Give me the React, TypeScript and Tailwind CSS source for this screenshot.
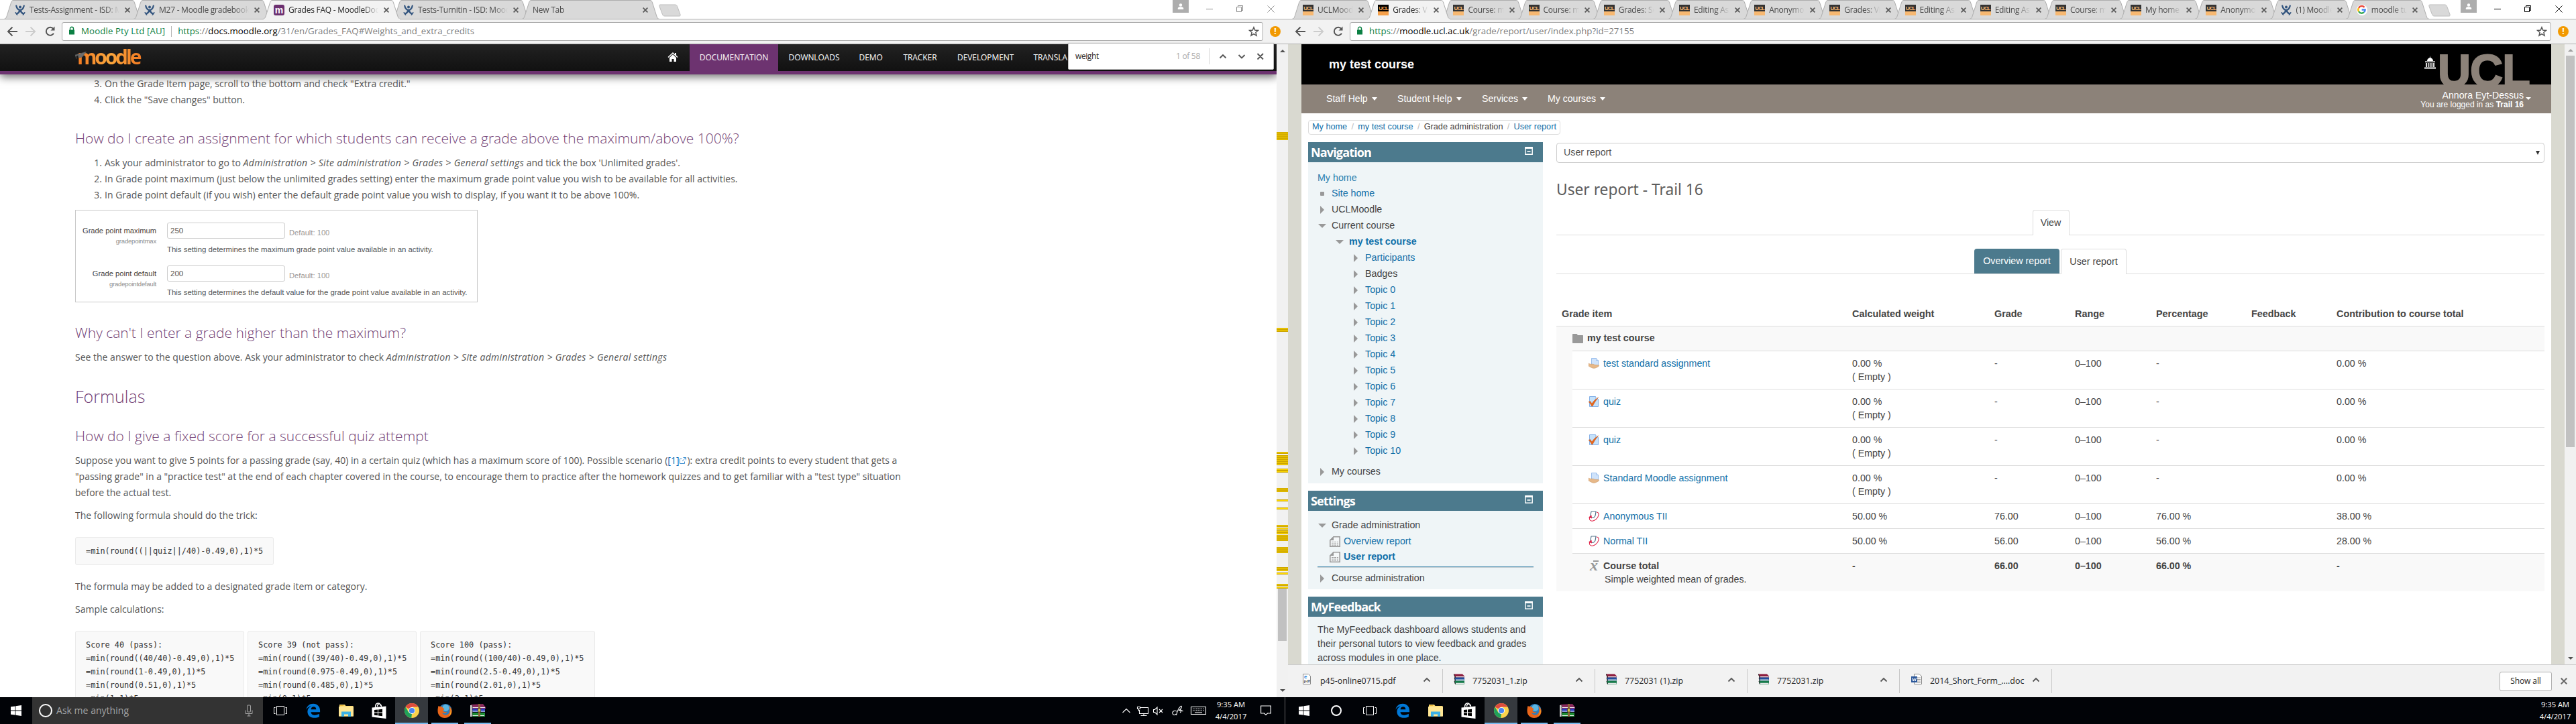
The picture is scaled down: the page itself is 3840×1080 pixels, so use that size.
import type { ReactNode } from "react";

/* ---------- small icons ---------- */
const Figure = () => (
  <svg width="16" height="16" viewBox="0 0 16 16" fill="none" stroke="#33557f" strokeLinecap="round">
    <circle cx="8" cy="3.6" r="2" fill="#33557f" stroke="none" />
    <path d="M2.2 1.5C3 5.5 5 7.5 8 8.3 11 7.500 13 5.500 13.800 1.500" strokeWidth="2.2" />
    <path d="M3 13.500C5.500 12.500 7 10.500 8 8M13 13.500C10.500 12.500 9 10.500 8 8" strokeWidth="2.400" />
    <path d="M1.200 11.800L3.600 15M14.800 11.800L12.400 15" strokeWidth="1.600" />
  </svg>
);
const MoodleFav = () => (
  <div className="flex h-4 w-4 items-center justify-center rounded-[3px] bg-[#6c3070] font-['Liberation_Sans'] text-[14px] leading-none font-bold text-white">m</div>
);
const UclFav = ({ dim }: { dim: boolean }) => (
  <div className={"flex h-4 w-4 flex-col " + (dim ? "bg-[#f7b871]" : "bg-[#f5a04a]")}>
    <div className={"flex h-[10px] items-end justify-center font-['Liberation_Sans'] text-[8px] leading-[8px] font-bold tracking-[-0.9px] " + (dim ? "bg-[#333] text-[#f7b871]" : "bg-black text-[#f5a04a]")}>UCL</div>
  </div>
);
const GoogleFav = () => (
  <div className="flex h-4 w-4 items-center justify-center rounded-full bg-white">
    <svg width="13" height="13" viewBox="0 0 16 16" fill="none" strokeWidth="3">
      <path d="M13 3.600A6.300 6.300 0 0 0 2.600 4.700" stroke="#ea4335" />
      <path d="M2.600 4.700A6.300 6.300 0 0 0 2.600 11.300" stroke="#fbbc05" />
      <path d="M2.600 11.300A6.300 6.300 0 0 0 12.400 12.600" stroke="#34a853" />
      <path d="M12.400 12.600A6.300 6.300 0 0 0 14.300 8H8.200" stroke="#4285f4" />
    </svg>
  </div>
);
const Cross = ({ s = 8, c = "#5a5a5a", w = 1.8 }: { s?: number; c?: string; w?: number }) => (
  <svg width={s} height={s} viewBox="0 0 8 8" className="shrink-0"><path d="M.6.6L7.400 7.400M7.400.6L.6 7.400" stroke={c} strokeWidth={(w * 8) / s} /></svg>
);
const Caret = () => <i className="ml-[6px] border-x-4 border-t-[5px] border-x-transparent border-t-white" />;

/* ---------- browser frame ---------- */
type TabT = { t: string; icon?: ReactNode; active?: boolean };

function Tab({ tab, w }: { tab: TabT; w: number }) {
  return (
    <div className={"relative mr-[-12px] flex h-[29px] shrink-0 items-center pl-4 " + (tab.active ? "z-10" : "")} style={{ width: w }}>
      <svg className="absolute inset-0" width={w} height="29" viewBox={`0 0 ${w} 29`}>
        <path d={`M0 28.500C3 28 3.500 26 4.500 23L10.500 4C11.500 1.500 12 .500 14 .500H${w - 14}C${w - 12} .500 ${w - 11.500} 1.500 ${w - 10.500} 4L${w - 4.500} 23C${w - 3.500} 26 ${w - 3} 28 ${w} 28.500`} fill={tab.active ? "#f2f2f2" : "#d9d9d9"} stroke="#adadad" />
        {tab.active ? <path d={`M1 28.500H${w - 1}`} stroke="#f2f2f2" strokeWidth="1.500" /> : <path d={`M0 28.500H${w}`} stroke="#adadad" />}
      </svg>
      {tab.icon && <span className="relative mr-[6px] h-4 w-4 shrink-0">{tab.icon}</span>}
      <span className={"relative flex-1 overflow-hidden text-[12px] tracking-[-0.25px] whitespace-nowrap [mask-image:linear-gradient(90deg,#000_calc(100%-22px),transparent)] " + (tab.active ? "text-[#222]" : "text-[#484848]")}>{tab.t}</span>
      <span className="relative mr-[17px] ml-2 flex"><Cross s={8} /></span>
    </div>
  );
}

function Browser({ tabs, tabW, url, inactive }: { tabs: TabT[]; tabW: number; url: ReactNode; inactive: boolean }) {
  const wc = inactive ? "#8c8c8c" : "#000";
  return (
    <div className="h-[66px] w-[1920px] shrink-0 font-['Open_Sans',sans-serif]">
      <div className="flex h-[29px] bg-white bg-[linear-gradient(#adadad,#adadad)] bg-[length:100%_1px] bg-bottom bg-no-repeat pl-[6px]">
        {tabs.map((t, i) => <Tab key={i} tab={t} w={tabW} />)}
        <svg width="36" height="20" viewBox="0 0 36 20" className="mt-[6px] ml-[10px]">
          <path d="M3 1H25C27 1 28 2 28.600 3.500L33 15.500C33.500 17.500 33 18 31.500 18H10C8 18 7 17 6.500 15.500L2 3.500C1.500 2 2 1 3 1Z" fill="#d9d9d9" stroke="#bcbcbc" />
        </svg>
        <div className="mr-[16px] ml-auto flex h-[26px]">
          <div className="flex h-[19px] w-6 items-center justify-center bg-[#adadad]">
            <svg width="10" height="10" viewBox="0 0 10 10" fill="#fff"><circle cx="5" cy="2.500" r="2.200" /><path d="M.8 9V7.500C.8 5.500 3 5.200 5 5.200s4.200.3 4.200 2.300V9z" /></svg>
          </div>
          <svg width="132" height="26" viewBox="0 0 132 26" fill="none" stroke={wc} strokeWidth="1">
            <path d="M26 13.500H36M71.500 10.500H78.500V17.500H71.500ZM73.500 10.500V8.500H80.500V15.500H78.500M117.500 8.500L127.500 18.500M127.500 8.500L117.500 18.500" />
          </svg>
        </div>
      </div>
      <div className="flex h-[37px] items-center border-b border-[#b0b0b0] bg-[#f2f2f2] pl-[10px]">
        <svg width="76" height="18" viewBox="0 0 76 18" fill="none" strokeWidth="2">
          <path d="M16 9H2M8.500 2.500L2 9L8.500 15.500" stroke="#555" />
          <path d="M28 9H42M35.500 2.500L42 9L35.500 15.500" stroke="#ccc" />
          <path d="M69.500 5A6 6 0 1 0 70 11.800" stroke="#555" />
          <path d="M71.500 1.500V7.500H65.500Z" fill="#555" />
        </svg>
        <div className="ml-[6px] flex h-7 w-[1791px] items-center rounded-[3px] border border-[#a8a8a8] bg-white pl-[9px] text-[13.25px] whitespace-nowrap text-[#808080]">
          <svg width="10" height="14" viewBox="0 0 10 14" className="mt-[-2px] mr-[9px]"><path d="M2.500 6V3.800a2.500 2.500 0 0 1 5 0V6" fill="none" stroke="#0b8043" strokeWidth="1.400" /><rect x="1" y="5.500" width="8" height="7" rx=".6" fill="#0b8043" /></svg>
          {url}
          <svg width="16" height="16" viewBox="0 0 24 24" className="mr-[5px] ml-auto" fill="none" stroke="#555" strokeWidth="2.200"><path d="M12 2.500l2.700 6.600 7.100.5-5.400 4.600 1.700 7L12 17.400l-6.100 3.800 1.700-7-5.400-4.600 7.100-.5z" /></svg>
        </div>
        <div className="ml-[10px] flex h-4 w-4 items-center justify-center rounded-full bg-[#f29900] text-[12px] leading-none font-bold text-white">!</div>
      </div>
    </div>
  );
}

/* ---------- left page ---------- */
function Nav({ children, cls = "" }: { children: ReactNode; cls?: string }) {
  return <span className={"text-[12px] tracking-[-0.08px] whitespace-nowrap text-white " + cls}>{children}</span>;
}
const H = ({ children, cls }: { children: ReactNode; cls: string }) => (
  <h3 className={"flex h-8 items-center text-[21px] font-light whitespace-nowrap text-[#733f75] " + cls}>{children}</h3>
);
const P = ({ children, cls = "" }: { children: ReactNode; cls?: string }) => (
  <p className={"h-6 leading-6 whitespace-pre " + cls}>{children}</p>
);
const Path = () => <em className="tracking-[0.32px]">Administration &gt; Site administration &gt; Grades &gt; General settings</em>;
const Li = ({ n, children }: { n: number; children: ReactNode }) => (
  <div className="flex h-6 leading-6 whitespace-pre"><span className="w-[44px] pr-[4px] text-right">{n}.</span>{children}</div>
);
function Setting({ label, sub, val, desc }: { label: string; sub: string; val: string; desc: string }) {
  return (
    <div className="flex h-16">
      <div className="flex w-[120px] flex-col items-end text-[#444]">
        <span className="mt-[5px] h-[14px] text-[11.2px] leading-[14px]">{label}</span>
        <span className="mt-[3px] text-[9.500px] leading-[12px] tracking-[-0.2px] text-[#8c8c8c]">{sub}</span>
      </div>
      <div className="ml-4">
        <div className="flex">
          <div className="h-6 w-[176px] rounded-[3px] border border-[#ccc] pl-[4px] text-[11.500px] leading-[22px] text-[#555]">{val}</div>
          <span className="mt-[8px] ml-[6px] text-[11.200px] leading-[14px] text-[#999]">Default: 100</span>
        </div>
        <p className="mt-[8px] text-[11.420px] leading-[16px] whitespace-nowrap text-[#555]">{desc}</p>
      </div>
    </div>
  );
}
const Code = ({ lines, cls = "" }: { lines: string[]; cls?: string }) => (
  <div className={"rounded-[3px] border border-[#eaeaea] bg-[#f9f9f9] py-[10px] pl-[15px] font-['DejaVu_Sans_Mono',monospace] text-[11.860px] leading-5 whitespace-pre text-[#333] " + cls}>
    {lines.map((l, i) => <div key={i}>{l}</div>)}
  </div>
);

const MARKS = [[197, 12], [489, 6], [674, 3], [679, 15], [699, 6], [728, 6], [745, 3], [757, 3], [783, 3], [787, 3], [791, 6], [798, 9], [816, 9], [846, 6], [854, 3], [871, 3], [875, 3]];

function MoodleLogo() {
  return (
    <div className="relative h-[30px] w-[100px]">
      <span className="absolute top-[-1px] left-[3px] bg-gradient-to-r from-[#f27a22] via-[#fba63c] to-[#f27a22] bg-clip-text pr-[4px] font-['Open_Sans'] text-[30px] leading-[30px] font-bold tracking-[-3.2px] text-transparent">moodle</span>
      <svg className="absolute top-[6px] left-0" width="20" height="12" viewBox="0 0 20 12"><path d="M0 5L17 0 13 4.500C12 8 9 9 5 9L4.500 5.500 1.500 6.500V11" fill="#6d6d6d" stroke="#555" strokeWidth=".6" /></svg>
    </div>
  );
}

function LeftPage() {
  return (
    <div className="relative flex h-[974px] w-[1920px] bg-white">
      <div className="h-full w-[1903px] overflow-hidden font-['Open_Sans',sans-serif] text-[14px] text-[#555]">
        <header className="relative flex h-[45px] border-b-[5px] border-[#6d3370] bg-gradient-to-b from-[#222] to-[#111] shadow-[0_4px_12px_rgba(0,0,0,0.55)]">
          <div className="w-[995px] pt-[5px] pl-[112px]"><MoodleLogo /></div>
          <div className="flex h-10 items-center">
            <svg width="16" height="16" viewBox="0 0 16 16" fill="#fff" className="mt-[-2px]"><path d="M8 1L.5 8l1 1L8 3l6.500 6 1-1L13 5.600V2h-2v1.800z" /><path d="M8 4.200L3 9v6h3.500v-4h3v4H13V9z" /></svg>
            <div className="ml-[17px] flex h-full w-[132px] items-center justify-center bg-[#6d3370]"><Nav>DOCUMENTATION</Nav></div>
            <Nav cls="ml-[15.500px] w-[105px]">DOWNLOADS</Nav>
            <Nav cls="w-[66px]">DEMO</Nav>
            <Nav cls="w-[80.500px]">TRACKER</Nav>
            <Nav cls="w-[113.500px]">DEVELOPMENT</Nav>
            <Nav>TRANSLA</Nav>
          </div>
        </header>
        <main className="pt-[2px] pl-[112px]">
          <Li n={3}>On the Grade Item page, scroll to the bottom and check "Extra credit."</Li>
          <Li n={4}>Click the "Save changes" button.</Li>
          <H cls="mt-[30px]">How do I create an assignment for which students can receive a grade above the maximum/above 100%?</H>
          <div className="mt-2">
            <Li n={1}>Ask your administrator to go to <Path /> and tick the box 'Unlimited grades'.</Li>
            <Li n={2}>In Grade point maximum (just below the unlimited grades setting) enter the maximum grade point value you wish to be available for all activities.</Li>
            <Li n={3}>In Grade point default (if you wish) enter the default grade point value you wish to display, if you want it to be above 100%.</Li>
          </div>
          <div className="mt-[10px] h-[138px] w-[600px] border border-[#c8c8c8] pt-[18px] font-['Liberation_Sans']">
            <Setting label="Grade point maximum" sub="gradepointmax" val="250" desc="This setting determines the maximum grade point value available in an activity." />
            <Setting label="Grade point default" sub="gradepointdefault" val="200" desc="This setting determines the default value for the grade point value available in an activity." />
          </div>
          <H cls="mt-[30px]">Why can't I enter a grade higher than the maximum?</H>
          <P cls="mt-2">See the answer to the question above. Ask your administrator to check <Path /></P>
          <h2 className="mt-[29px] flex h-9 items-center text-[25px] font-light text-[#733f75]">Formulas</h2>
          <H cls="mt-[25px]">How do I give a fixed score for a successful quiz attempt</H>
          <P cls="mt-2">Suppose you want to give 5 points for a passing grade (say, 40) in a certain quiz (which has a maximum score of 100). Possible scenario (<span className="text-[#0b6bb5]">[1]<svg width="12" height="12" viewBox="0 0 12 12" className="mb-[2px] inline" fill="none" stroke="#3d8fd0"><path d="M4.500 3.500H1.500V10.500H8.500V7.500M6.500 1.500H10.500V5.500M10.500 1.500L5 7" /></svg></span>): extra credit points to every student that gets a</P>
          <P>"passing grade" in a "practice test" at the end of each chapter covered in the course, to encourage them to practice after the homework quizzes and to get familiar with a "test type" situation</P>
          <P>before the actual test.</P>
          <P cls="mt-[10px]">The following formula should do the trick:</P>
          <Code cls="mt-5 w-[296px]" lines={["=min(round((||quiz||/40)-0.49,0),1)*5"]} />
          <P cls="mt-5">The formula may be added to a designated grade item or category.</P>
          <P cls="mt-[10px]">Sample calculations:</P>
          <div className="mt-5 flex gap-[5px]">
            <Code cls="w-[252px]" lines={["Score 40 (pass):", "=min(round((40/40)-0.49,0),1)*5", "=min(round(1-0.49,0),1)*5", "=min(round(0.51,0),1)*5", "=min(1,1)*5"]} />
            <Code cls="w-[252px]" lines={["Score 39 (not pass):", "=min(round((39/40)-0.49,0),1)*5", "=min(round(0.975-0.49,0),1)*5", "=min(round(0.485,0),1)*5", "=min(0,1)*5"]} />
            <Code cls="w-[261px]" lines={["Score 100 (pass):", "=min(round((100/40)-0.49,0),1)*5", "=min(round(2.5-0.49,0),1)*5", "=min(round(2.01,0),1)*5", "=min(2,1)*5"]} />
          </div>
        </main>
      </div>
      <div className="relative h-full w-[17px] bg-[#f1f1f1]">
        <i className="absolute top-[8px] left-[5px] border-x-[4px] border-b-[4px] border-x-transparent border-b-[#505050]" />
        {MARKS.map(([y, h], i) => (
          <i key={i} className="absolute left-0 w-[17px] bg-[repeating-linear-gradient(#cda600_0px,#cda600_1px,#ffd900_1px,#ffd900_2px,#cda600_2px,#cda600_3px)]" style={{ top: y - 66, height: h }} />
        ))}
        <i className="absolute top-[812px] left-[2px] h-[78px] w-[13px] bg-[#c1c1c1]" />
        <i className="absolute bottom-[8px] left-[5px] border-x-[4px] border-t-[4px] border-x-transparent border-t-[#505050]" />
      </div>
      <div className="absolute top-[-2px] right-[21px] z-20 flex h-[40px] w-[307px] items-center rounded-b-[2px] border border-[#bbb] bg-white pr-[2px] pl-[10px] font-['Open_Sans',sans-serif] text-[#222] shadow-[0_1px_3px_rgba(0,0,0,0.35)]">
        <span className="w-[150px] text-[12px] tracking-[-0.4px]">weight</span>
        <span className="text-[12px] tracking-[-0.300px] text-[#aaa]">1 of 58</span>
        <i className="ml-auto h-6 w-px bg-[#d4d4d4]" />
        <svg width="80" height="12" viewBox="0 0 80 12" className="ml-[13px]" fill="none" stroke="#555" strokeWidth="1.900"><path d="M2.500 8.500L7 4 11.500 8.500M30.500 4L35 8.500 39.500 4M58.500 2L67 10.500M67 2L58.500 10.500" /></svg>
      </div>
    </div>
  );
}

/* ---------- right page ---------- */
const Collapse = () => (
  <svg width="12" height="12" viewBox="0 0 12 12" className="mt-[-4px]"><path d="M.8 .8H11.200V11.200H.8z" fill="none" stroke="#fff" strokeWidth="1.400" /><path d="M.5 1.800H11.500" stroke="#fff" strokeWidth="2.200" /><path d="M3.500 7H8.500" stroke="#fff" strokeWidth="1.600" /></svg>
);
const BlockHead = ({ t, cls = "" }: { t: string; cls?: string }) => (
  <div className={"flex h-[30px] items-center justify-between bg-[#4c7a8d] pr-[15px] pl-[4px] " + cls}>
    <b className="font-['Open_Sans',sans-serif] text-[18px] tracking-[-0.85px] text-white">{t}</b>
    <Collapse />
  </div>
);
const Right = () => <i className="border-y-[6px] border-l-[6px] border-y-transparent border-l-[#999]" />;
const Down = () => <i className="border-x-[6px] border-t-[6px] border-x-transparent border-t-[#999]" />;
const Doc = () => (
  <svg width="16" height="16" viewBox="0 0 16 16"><path d="M6 .8H15.200V15.200H.8V6z" fill="#f5f8f9" stroke="#999" strokeWidth="1.600" /><path d="M6 0V6H0" fill="#999" /><path d="M3 8.500H13M3 11H13M3 13.200H13" stroke="#999" strokeWidth="1" strokeDasharray="3 1" /></svg>
);
function Node({ t, mark, ind, link = true, bold = false, h = "h-6" }: { t: string; mark: "r" | "d" | "s" | "f"; ind: string; link?: boolean; bold?: boolean; h?: string }) {
  return (
    <div className={`flex items-center whitespace-nowrap ${h} ${ind} ${link ? "text-[#0f6fa8]" : "text-[#444]"} ${bold ? "font-bold" : ""}`}>
      <span className={"flex items-center justify-center " + (mark === "f" ? "mr-[5px] w-4" : "mr-[7px] w-[14px]")}>
        {mark === "r" ? <Right /> : mark === "d" ? <Down /> : mark === "f" ? <Doc /> : <i className="h-[6px] w-[6px] rounded-[1px] bg-[#999]" />}
      </span>
      {t}
    </div>
  );
}

const AssignIcon = () => (
  <svg width="16" height="16" viewBox="0 0 16 16"><path d="M4.500.5H11.500L14.500 3.500V12H4.500z" fill="#cfe3fb" stroke="#85b1e8" strokeWidth=".8" /><path d="M11.500.5V3.500H14.500" fill="#fff" stroke="#85b1e8" strokeWidth=".8" /><path d="M0 8C2 9 3 9.500 5 9.200 7 9 8 9.700 9.500 10.300L15 10.500C16 11 15.800 12 15 12.500 12 14.500 9 15.800 6.500 15.200 4 14.500 2 13 0 12z" fill="#e7b888" stroke="#c08f5c" strokeWidth=".5" /></svg>
);
const QuizIcon = () => (
  <svg width="16" height="16" viewBox="0 0 16 16"><path d="M1.500.5H10.500L14.500 4.500V15.500H1.500z" fill="#c5e2fb" stroke="#85b1e8" /><path d="M10.500.5V4.500H14.500" fill="#eef6fe" stroke="#85b1e8" strokeWidth=".7" /><path d="M0 8.500L2.500 7.500 5 11C7.500 7 10.500 4.500 14.800 1.800 11 6 8.500 10.500 6 15H4.800C3.800 12.500 2 10 0 8.500z" fill="#e8671c" stroke="#b8470a" strokeWidth=".4" /></svg>
);
const TiiIcon = () => (
  <svg width="16" height="16" viewBox="0 0 16 16" fill="none"><path d="M4 1H11L10.200 6.500C9.800 8.500 8.500 9.800 6.500 10.500M4 1L2.500 9.500L6.800 10.500" stroke="#54748c" strokeWidth="1.200" /><path d="M12 2C14.500 2 15.500 4 15 6.500 14 11 9 15.500 5 15.200 2 15 1 13 1.500 9.500" stroke="#e02045" strokeWidth="1.100" /><path d="M0 9.500L4.500 6.500 5 11.500z" fill="#e02045" /></svg>
);
const MeanIcon = () => (
  <span className="flex h-4 w-4 flex-col items-center text-[#999]"><i className="ml-[5px] h-[2px] w-[8px] shrink-0 bg-[#999]" /><i className="mt-[-1px] font-['Liberation_Serif'] text-[24px] leading-[13px] font-bold">x</i></span>
);

const COLS = "grid grid-cols-[417px_212px_120px_121px_142px_127px_1fr]";
function Row({ icon, name, w, g, p, c, tall }: { icon: ReactNode; name: string; w: string; g: string; p: string; c: string; tall?: boolean }) {
  return (
    <div className={`${COLS} ml-6 border-t border-[#ddd] bg-white pt-2 leading-5 ${tall ? "h-[57px]" : "h-[37px]"}`}>
      <span className="flex h-5 items-center pl-6 text-[#0f6fa8]"><span className="mr-[6px]">{icon}</span>{name}</span>
      <span>{w}{tall && <><br />( Empty )</>}</span>
      <span>{g}</span><span>0–100</span><span>{p}</span><span /><span>{c}</span>
    </div>
  );
}

function WinRar({ big = false }: { big?: boolean }) {
  return big ? (
    <svg width="24" height="22" viewBox="0 0 24 22"><path d="M2 2L20 1 24 6V8H2z" fill="#8a2a5e" /><path d="M1 8H23V13H1z" fill="#2a3cc0" /><path d="M1 14H23V20H1z" fill="#1d8f35" /><path d="M2 6.500H23M1 12H23M1 18.500H22" stroke="#eee" strokeWidth="1.200" /><path d="M1 3V20H4V3z" fill="#cfcfcf" /><path d="M4 3V20" stroke="#333" strokeDasharray="2 1" /><path d="M13 1H16V20H13z" fill="#8c6239" /><path d="M12.500 8H16.500V13H12.500z" fill="#d9c24a" stroke="#222" strokeWidth=".6" /></svg>
  ) : (
    <svg width="16" height="16" viewBox="0 0 16 16"><path d="M0 .5H13L16 3.500V5.500H2z" fill="#8e1d3e" /><path d="M1 5.500H16V10H2z" fill="#1f4e9c" /><path d="M1 10.500H16V15.500H2z" fill="#157a4a" /><path d="M3 4.500H15.500M3 9H15.500M3 14.300H15.500" stroke="#e8e8e8" strokeWidth="1.200" /><path d="M0 .5L2.500 5.500 1 6 2.500 10.500 1 11 2.500 15.500" fill="none" stroke="#222" /></svg>
  );
}
function Download({ icon, name, w }: { icon: ReactNode; name: string; w: string }) {
  return (
    <div className={"flex h-9 items-center border-r border-[#c8c8c8] pr-[17px] " + w}>
      <span className="mt-[-6px] mr-3 flex w-4 justify-center">{icon}</span>
      <span className="text-[12.400px] whitespace-nowrap text-[#222]">{name}</span>
      <svg width="12" height="8" viewBox="0 0 12 8" className="mt-[-5px] ml-auto" fill="none" stroke="#555" strokeWidth="1.800"><path d="M1.500 6.500L6 2 10.500 6.500" /></svg>
    </div>
  );
}

function RightPage() {
  return (
    <>
      <div className="flex h-[925px] w-[1920px] overflow-hidden bg-[#d9d9d0] pl-5 font-['Liberation_Sans',sans-serif] text-[14.250px] text-[#444]">
        <div className="w-[1863px] bg-white">
          <div className="flex h-[60px] bg-black">
            <b className="pt-[15px] pl-[41px] text-[18px] leading-[30px] text-white">my test course</b>
            <svg className="mt-[17px] ml-auto" width="17" height="20" viewBox="0 0 17 20" fill="#fff"><path d="M8.500 0L9 3C12 4 13 6 13 8H4C4 6 5 4 8 3zM1 8.500H16V10H1zM2 11H3.800V17H2zM5 11H6.500V17H5zM7.800 11H9.300V17H7.800zM10.500 11H12V17H10.500zM13.200 11H15V17H13.200zM0 17.500H17V19.500H0z" /></svg>
            <div className="mt-[9px] mr-[28px] ml-[3px] h-[60px] w-[141px] text-[68px] leading-[60px] font-bold tracking-[-1px] text-[#8c8279] [-webkit-text-stroke:2px_#8c8279]">UCL</div>
          </div>
          <div className="relative flex h-[43px] items-center bg-[#8c8279] pl-[37px] text-[14.100px] text-white">
            <span className="flex w-[106px] items-center">Staff Help<Caret /></span>
            <span className="flex w-[126px] items-center">Student Help<Caret /></span>
            <span className="flex w-[98px] items-center">Services<Caret /></span>
            <span className="flex items-center">My courses<Caret /></span>
            <div className="mt-[2px] mr-[30px] ml-auto flex items-center">
              <div className="text-right leading-[14px]">
                <div>Annora Eyt-Dessus</div>
                <div className="text-[12px]">You are logged in as <b>Trail 16</b></div>
              </div>
              <i className="mt-[-4px] ml-[3px] border-x-4 border-t-4 border-x-transparent border-t-white" />
            </div>
          </div>
          <div className="mt-[10px] ml-[10px] flex h-[22px] w-[376px] items-center justify-between rounded-[4px] border border-[#ddd] px-[5px] text-[12.700px] whitespace-nowrap text-[#0f6fa8]">
            <span>My home</span><span className="text-[#bbb]">/</span><span>my test course</span><span className="text-[#bbb]">/</span><span className="text-[#444]">Grade administration</span><span className="text-[#bbb]">/</span><span>User report</span>
          </div>
          <div className="mt-[11px] flex">
            <aside className="ml-[10px] w-[350px]">
              <BlockHead t="Navigation" />
              <div className="h-[479px] bg-[#eff5f7] pt-[11px] pl-[14px]">
                <div className="h-6 leading-6 text-[#2a7fae]">My home</div>
                <Node t="Site home" mark="s" ind="" />
                <Node t="UCLMoodle" mark="r" ind="" link={false} />
                <Node t="Current course" mark="d" ind="" link={false} />
                <Node t="my test course" mark="d" ind="pl-[26px]" bold />
                <Node t="Participants" mark="r" ind="pl-[50px]" />
                <Node t="Badges" mark="r" ind="pl-[50px]" link={false} />
                {Array.from({ length: 11 }, (_, i) => <Node key={i} t={`Topic ${i}`} mark="r" ind="pl-[50px]" />)}
                <Node t="My courses" mark="r" ind="mt-[7px]" link={false} />
              </div>
              <BlockHead t="Settings" cls="mt-[11px]" />
              <div className="h-[117px] bg-[#eff5f7] px-[14px] pt-[10px]">
                <Node t="Grade administration" mark="d" ind="" link={false} />
                <Node t="Overview report" mark="f" ind="pl-[18px]" h="h-[23px]" />
                <Node t="User report" mark="f" ind="pl-[18px]" h="h-[23px]" bold />
                <div className="mt-[3px] h-[2px] border-t border-[#3d86ab] bg-[#c4cfd4]" />
                <Node t="Course administration" mark="r" ind="mt-[4px]" link={false} />
              </div>
              <BlockHead t="MyFeedback" cls="mt-[11px]" />
              <p className="bg-[#eff5f7] pt-[9px] pl-[14px] leading-[21px] whitespace-nowrap">The MyFeedback dashboard allows students and<br />their personal tutors to view feedback and grades<br />across modules in one place.</p>
            </aside>
            <section className="ml-5 w-[1473px]">
              <div className="mt-px flex h-[30px] items-center justify-between rounded-[4px] border border-[#ccc] pr-[6px] pl-[10px] text-[#555]">User report<i className="border-x-[3px] border-t-[6px] border-x-transparent border-t-[#333]" /></div>
              <h2 className="mt-[22px] h-[37px] font-['Noto_Sans',sans-serif] text-[22.750px] leading-[36px] text-[#5c5c5c]">User report - Trail 16</h2>
              <div className="mt-[11px] flex h-[38px] justify-center border-b border-[#ddd]">
                <div className="-mr-px flex h-[38px] w-[55px] items-center justify-center rounded-t-[4px] border border-b-0 border-[#ddd] bg-white">View</div>
              </div>
              <div className="mt-[20px] flex h-[38px] items-end justify-center border-b border-[#ddd]">
                <div className="-mb-px flex h-[38px]">
                  <div className="mr-[2px] flex h-[37px] w-[127px] items-center justify-center rounded-t-[4px] bg-[#4c7a8d] text-white">Overview report</div>
                  <div className="flex h-[38px] w-[98px] items-center justify-center rounded-t-[4px] border border-b-0 border-[#ddd] bg-white">User report</div>
                </div>
              </div>
              <div className="mt-[41px] grid h-[36px] grid-cols-[433px_212px_120px_121px_142px_127px_1fr] items-center pt-[2px] pl-2 text-[14.400px] font-bold">
                <span>Grade item</span><span>Calculated weight</span><span>Grade</span><span>Range</span><span>Percentage</span><span>Feedback</span><span>Contribution to course total</span>
              </div>
              <div className="bg-[#f9f9f9] pb-[1px]">
                <div className="flex h-[37px] items-center border-t border-[#ddd] pl-6 font-bold">
                  <svg width="16" height="14" viewBox="0 0 16 14" className="mr-[6px]"><path d="M0 1C0 .4.4 0 1 0H6.500L8 2H15C15.600 2 16 2.400 16 3V13C16 13.600 15.600 14 15 14H1C.4 14 0 13.600 0 13z" fill="#999" /></svg>my test course
                </div>
                <Row tall icon={<AssignIcon />} name="test standard assignment" w="0.00 %" g="-" p="-" c="0.00 %" />
                <Row tall icon={<QuizIcon />} name="quiz" w="0.00 %" g="-" p="-" c="0.00 %" />
                <Row tall icon={<QuizIcon />} name="quiz" w="0.00 %" g="-" p="-" c="0.00 %" />
                <Row tall icon={<AssignIcon />} name="Standard Moodle assignment" w="0.00 %" g="-" p="-" c="0.00 %" />
                <Row icon={<TiiIcon />} name="Anonymous TII" w="50.00 %" g="76.00" p="76.00 %" c="38.00 %" />
                <Row icon={<TiiIcon />} name="Normal TII" w="50.00 %" g="56.00" p="56.00 %" c="28.00 %" />
                <div className={`${COLS} ml-6 h-[56px] border-t border-[#ddd] pt-2 leading-5 font-bold`}>
                  <div>
                    <span className="flex h-5 items-center pl-6"><span className="mr-[6px]"><MeanIcon /></span>Course total</span>
                    <span className="block pl-12 font-normal">Simple weighted mean of grades.</span>
                  </div>
                  <span>-</span><span>66.00</span><span>0–100</span><span>66.00 %</span><span /><span>-</span>
                </div>
              </div>
            </section>
          </div>
        </div>
        <div className="relative ml-5 h-full w-[17px] bg-[#f1f1f1]">
          <i className="absolute top-[7px] left-[5px] border-x-[4px] border-b-[4px] border-x-transparent border-b-[#a0a0a0]" />
          <i className="absolute top-[17px] left-[2px] h-[584px] w-[13px] bg-[#c1c1c1]" />
          <i className="absolute bottom-[7px] left-[5px] border-x-[4px] border-t-[4px] border-x-transparent border-t-[#505050]" />
        </div>
      </div>
      <div className="flex h-[49px] items-center border-t border-[#ccc] bg-[#f2f2f2] pl-5 font-['Open_Sans',sans-serif]">
        <Download w="w-[211px]" name="p45-online0715.pdf" icon={
          <svg width="12" height="16" viewBox="0 0 12 16"><path d="M.5.5H8.500L11.500 3.500V15.500H.5z" fill="#fff" stroke="#888" /><text x="2" y="7" fontSize="8" fontWeight="700" fill="#0078d7" fontFamily="Liberation Sans">e</text><text x="1.500" y="13" fontSize="6" fontWeight="700" fill="#444" fontFamily="Liberation Sans">pdf</text></svg>} />
        <div className="flex pl-[16px]"><Download w="w-[211px]" name="7752031_1.zip" icon={<WinRar />} /></div>
        <div className="flex pl-[16px]"><Download w="w-[211px]" name="7752031 (1).zip" icon={<WinRar />} /></div>
        <div className="flex pl-[16px]"><Download w="w-[211px]" name="7752031.zip" icon={<WinRar />} /></div>
        <div className="flex pl-[17px]"><Download w="w-[210px]" name="2014_Short_Form_....doc" icon={
          <svg width="16" height="16" viewBox="0 0 16 16"><path d="M4.500.5H12L15.500 4V15.500H4.500z" fill="#fff" stroke="#888" /><path d="M9 6H14M9 8.500H14M9 11H14M9 13.500H14" stroke="#999" /><rect y="4" width="9" height="9" fill="#2b579a" /><path d="M1.500 6L3 11 4.500 7 6 11 7.500 6" stroke="#fff" fill="none" /></svg>} /></div>
        <div className="mr-[13px] ml-auto flex h-[29px] w-[78px] items-center justify-center rounded-[3px] border border-[#b0b0b0] bg-white text-[12px] tracking-[-0.1px] text-[#222]">Show all</div>
        <span className="mr-[13px]"><Cross s={10} c="#666" w={2} /></span>
      </div>
    </>
  );
}

/* ---------- task bar ---------- */
const WinLogo = () => <svg width="16" height="16" viewBox="0 0 16 16" fill="#fff"><path d="M0 2.300L6.600 1.400V7.600H0zM7.400 1.300L16 0V7.600H7.400zM0 8.400H6.600V14.600L0 13.700zM7.400 8.400H16V16L7.400 14.800z" /></svg>;
const Edge = () => <svg width="22" height="22" viewBox="0 0 24 24" fill="#0078d7"><path d="M.5 10.700C1.300 4.500 6 .8 12 .8c6.700 0 11 4.800 11 11v2.600H8.200c.2 3.400 3.100 4.900 6.500 4.900 2.500 0 4.900-.7 7-2v4.800c-2.200 1.200-5 1.700-7.700 1.700-6.700 0-11.400-3.800-11.400-10.200 0-4.100 2.500-7.200 6-9C4.500 5.400 1.900 7.600.5 10.700zM8.300 10h8.400c0-2.600-1.500-4.200-4-4.200-2.600 0-4.200 1.600-4.400 4.200z" /></svg>;
const Folder = () => <svg width="22" height="18" viewBox="0 0 22 18"><path d="M1 0H9L10.500 2H21.500V17.500H1z" fill="#fbd86e" /><path d="M0 3H22V17.500H0z" fill="#ffe694" /><path d="M2 1H7V2H2z" fill="#e8b637" /><path d="M4 10.500H18V18H14V14.500H8V18H4z" fill="#3cb1e6" /></svg>;
const Store = () => <svg width="22" height="24" viewBox="0 0 22 24"><path d="M5.500 7C5.500 3 7 1 9.500 1S13.500 3 13.500 5M8.500 6C8.500 3 10 1.500 12 2.200S14.500 5 14.500 6" fill="none" stroke="#fff" strokeWidth="1.400" /><path d="M.5 7.500L21.500 5.500V24L.5 21.500z" fill="#fff" /><path d="M4 11L9 10.500V14.500H4zM10 10.400L16 9.700V14.500H10zM4 15.500H9V19.300L4 18.700zM10 15.500H16V20.200L10 19.500z" fill="#000" /></svg>;
const Chrome = () => <svg width="22" height="22" viewBox="0 0 22 22"><circle cx="11" cy="11" r="11" fill="#fcd34b" /><path d="M11 11L1.500 5.500A11 11 0 0 1 20.500 5.500H11z" fill="#dd4b3e" /><path d="M1.500 5.500L6.300 13.800 11 16 10.500 22A11 11 0 0 1 1.500 5.500z" fill="#1fa05a" /><path d="M11 16L15.800 13.500 10.500 22z" fill="#fcd34b" /><circle cx="11" cy="11" r="5" fill="#fff" /><circle cx="11" cy="11" r="4.100" fill="#4a86f0" /></svg>;
const Firefox = () => <svg width="22" height="22" viewBox="0 0 22 22"><circle cx="12" cy="10.500" r="9.500" fill="#2a7fc0" /><circle cx="12.500" cy="7" r="5" fill="#5bb5e0" /><path d="M1.500 4C2.500 5 4 4.500 6 5 8 5.500 8 7.500 10 8 11 9 9.500 10 8.500 10.500 9 13 12 14 14.500 12.500 13.500 15.500 9 16 7 14 8.500 18.500 15 18.500 17.500 14.500 19 11.500 18.500 7 17 4 20.500 6.500 22 10 21.500 13.500 20.500 19 16 22 11 22 5 22 .5 17.500.5 11.500.5 8.500 1 6 1.500 4z" fill="#e8661b" /><path d="M19.500 8C21.500 12 20.500 17 17 19.500 20 15 20 12 19.500 8z" fill="#fbc02d" /></svg>;
const TaskView = () => <svg width="20" height="16" viewBox="0 0 20 16" fill="none" stroke="#fff"><path d="M4.500 1.500H15.500V14.500H4.500zM2.500 3.500H.5V12.500H2.500M17.500 3.500H19.500V12.500H17.500" /></svg>;

function Slot({ children, line, active }: { children: ReactNode; line?: boolean; active?: boolean }) {
  return (
    <span className={"relative flex h-10 w-[49px] items-center justify-center " + (active ? "bg-[#35393e]" : "")}>
      {children}
      {line && <i className={"absolute bottom-0 h-[2px] bg-[#76b9ed] " + (active ? "w-[49px]" : "w-10")} />}
    </span>
  );
}
const Pins = () => (
  <div className="ml-px flex">
    <Slot><TaskView /></Slot><Slot><Edge /></Slot><Slot><Folder /></Slot><Slot><Store /></Slot>
    <Slot line active><Chrome /></Slot><Slot line><Firefox /></Slot><Slot line><WinRar big /></Slot>
  </div>
);
const Clock = () => (
  <div className="flex w-[50px] flex-col items-center text-[11.200px] leading-[18px] whitespace-nowrap text-white"><span>9:35 AM</span><span>4/4/2017</span></div>
);

function TaskbarLeft() {
  return (
    <div className="flex h-10 w-[1920px] items-center bg-[#010307] font-['Open_Sans',sans-serif]">
      <span className="flex w-12 justify-center"><WinLogo /></span>
      <div className="flex h-10 w-[344px] items-center bg-[#333] pl-[10px]">
        <i className="h-5 w-5 rounded-full border-[2.500px] border-white" />
        <span className="ml-[6px] text-[14.050px] text-[#a3a3a3]">Ask me anything</span>
        <svg width="12" height="18" viewBox="0 0 12 18" className="mr-[15px] ml-auto" fill="none" stroke="#a3a3a3"><rect x="3.500" y="1" width="5" height="10" rx="1" /><path d="M1 8.500V13.500H11V8.500M6 13.500V17M3.500 17H8.500" /></svg>
      </div>
      <Pins />
      <svg width="128" height="20" viewBox="0 0 128 20" className="mr-[11px] ml-auto" fill="none" stroke="#fff" strokeWidth="1.100">
        <path d="M2.500 13L8 7.500 13.500 13" />
        <path d="M29 5.500H40.500V14.500H27.500V9M34 14.500V17.500M29.500 17.500H38.500M24.500 4.500H28.500V7.500H24.500ZM26.500 7.500V11" />
        <path d="M48.500 8.500H50.500L54 5V16L50.500 12.500H48.500zM57 8L62 13M62 8L57 13" />
        <path d="M90 3C86 5 84 10 82.500 17M90 3C91 5 89 8 86 10M87 10C89.500 9 91 11 88 13M88 8.500L92.500 11M83 11C79 9 76 12 77 14.500 78 17 81 17 82 15" />
        <path d="M104.500 4.500H126.500V15.500H104.500z" />
        <path d="M107 7.500H124.500M107 10H124.500" strokeDasharray="1.500 1" />
        <path d="M110 13H121" />
      </svg>
      <Clock />
      <svg width="16" height="16" viewBox="0 0 16 16" className="mr-[20px] ml-[19px]" fill="none" stroke="#fff" strokeWidth="1.200"><path d="M.6 1H15.400V12H10.500L8 14.500 5.500 12H.6z" /></svg>
      <i className="mr-1 h-10 w-px bg-[#666]" />
    </div>
  );
}
function TaskbarRight() {
  return (
    <div className="flex h-10 w-[1920px] items-center bg-[#010307] font-['Open_Sans',sans-serif]">
      <span className="flex w-12 justify-center"><WinLogo /></span>
      <span className="flex w-12 justify-center"><i className="h-4 w-4 rounded-full border-2 border-white" /></span>
      <Pins />
      <div className="mr-[6px] ml-auto"><Clock /></div>
    </div>
  );
}

const UCL_TABS = ["UCLMoodle", "Grades: View", "Course: my", "Course: my", "Grades: Set", "Editing Ass", "Anonymous", "Grades: View", "Editing Ass", "Editing Ass", "Course: my", "My home", "Anonymous"];

export default function App() {
  const leftTabs: TabT[] = [
    { t: "Tests-Assignment - ISD: Moodle", icon: <Figure /> },
    { t: "M27 - Moodle gradebook", icon: <Figure /> },
    { t: "Grades FAQ - MoodleDocs", icon: <MoodleFav />, active: true },
    { t: "Tests-Turnitin - ISD: Moodle", icon: <Figure /> },
    { t: "New Tab" },
  ];
  const rightTabs: TabT[] = [
    ...UCL_TABS.map((t, i) => ({ t, icon: <UclFav dim={i !== 1} />, active: i === 1 })),
    { t: "(1) Moodle", icon: <Figure /> },
    { t: "moodle turn", icon: <GoogleFav /> },
  ];
  return (
    <div className="flex h-[1080px] w-[3840px] overflow-hidden bg-white">
      <div className="flex w-[1920px] flex-col">
        <Browser inactive tabW={205} tabs={leftTabs} url={
          <>
            <span className="tracking-[0.120px] text-[#0b8043]">Moodle Pty Ltd [AU]</span>
            <i className="mx-[9px] h-4 w-px bg-[#b5b5b5]" />
            <span><span className="text-[#0b8043]">https</span>://<span className="text-black">docs.moodle.org</span>/31/en/Grades_FAQ#Weights_and_extra_credits</span>
          </>} />
        <LeftPage />
        <TaskbarLeft />
      </div>
      <div className="flex w-[1920px] flex-col">
        <Browser inactive={false} tabW={124.200} tabs={rightTabs} url={
          <span><span className="text-[#0b8043]">https</span>://<span className="text-black">moodle.ucl.ac.uk</span>/grade/report/user/index.php?id=27155</span>} />
        <RightPage />
        <TaskbarRight />
      </div>
    </div>
  );
}
